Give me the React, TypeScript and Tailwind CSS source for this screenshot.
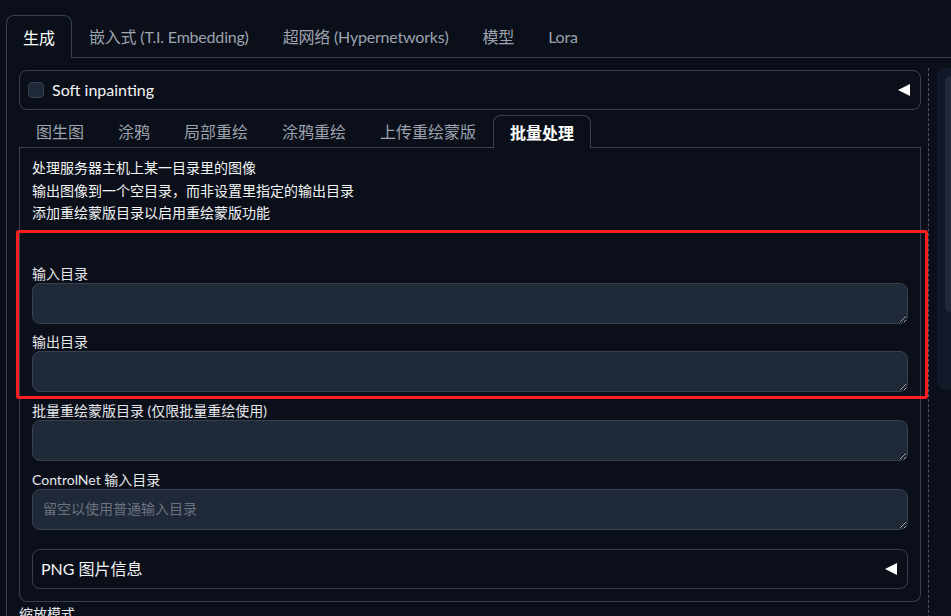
import React from "react";

function Tri({ className = "" }: { className?: string }) {
  return (
    <svg width="12" height="12" viewBox="0 0 12 12" className={className}>
      <polygon points="12,0 12,12 0,6" fill="#ffffff" />
    </svg>
  );
}

function Field({ label, placeholder }: { label: string; placeholder?: string }) {
  return (
    <div className="flex flex-col">
      <div className="h-[19px] leading-[19px] text-[14px] text-[#e5e7eb]">{label}</div>
      <textarea
        placeholder={placeholder}
        className="h-[41px] w-full resize-y rounded-lg border border-[#374151] bg-[#1f2937] px-[10px] py-[9px] text-[14px] leading-[20px] text-[#f3f4f6] placeholder:text-[#6b7280] outline-none"
      />
    </div>
  );
}

export default function App() {
  const topTabs = ["嵌入式 (T.I. Embedding)", "超网络 (Hypernetworks)", "模型", "Lora"];
  const subTabs = ["图生图", "涂鸦", "局部重绘", "涂鸦重绘", "上传重绘蒙版"];
  return (
    <div className="relative h-[616px] w-[951px] overflow-hidden bg-[#0b0f19] font-['Lato','Noto_Sans_CJK_SC',sans-serif]">
      <div className="pl-[6px] pt-[15px]">
        {/* top tabs */}
        <div className="flex w-[1000px] items-end border-b border-[#374151]">
          <div className="-mb-px flex h-[43px] items-center rounded-t-lg border border-b-0 border-[#374151] bg-[#0b0f19] px-4 pt-[2px] text-[16px] text-white">
            生成
          </div>
          {topTabs.map((t) => (
            <div
              key={t}
              className="flex h-[42px] items-center border border-transparent px-4 pt-[2px] text-[16px] tracking-[-0.2px] text-[#9ca3af]"
            >
              {t}
            </div>
          ))}
        </div>
        {/* outer panel */}
        <div className="flex w-[1000px] border-l border-[#374151] pl-3 pt-3">
          <div className="flex w-[902px] flex-col">
            {/* soft inpainting */}
            <div className="flex h-[40px] items-center rounded-lg border border-[#374151] pl-2 pr-[10px]">
              <div className="h-4 w-4 rounded-[4px] border border-[#374151] bg-[#1f2937]" />
              <span className="ml-2 text-[16px] text-[#f3f4f6]">Soft inpainting</span>
              <Tri className="ml-auto" />
            </div>
            {/* sub tabs */}
            <div className="mt-[5px] flex items-end border-b border-[#374151]">
              {subTabs.map((t) => (
                <div
                  key={t}
                  className="flex h-[32px] items-center border border-transparent px-4 pt-[1px] text-[16px] text-[#9ca3af]"
                >
                  {t}
                </div>
              ))}
              <div className="-mb-px flex h-[33px] items-center rounded-t-lg border border-b-0 border-[#374151] bg-[#0b0f19] px-4 pt-[1px] text-[16px] font-bold text-white">
                批量处理
              </div>
            </div>
            {/* panel */}
            <div className="flex flex-col rounded-b-lg border border-t-0 border-[#374151] px-3 pb-3 pt-[9px]">
              <div className="text-[14px] leading-[22.5px] text-[#f3f4f6]">
                <p>处理服务器主机上某一目录里的图像</p>
                <p>输出图像到一个空目录，而非设置里指定的输出目录</p>
                <p>添加重绘蒙版目录以启用重绘蒙版功能</p>
              </div>
              <div className="mt-[39px] flex flex-col gap-[8.7px]">
                <Field label="输入目录" />
                <Field label="输出目录" />
                <Field label="批量重绘蒙版目录 (仅限批量重绘使用)" />
                <Field label="ControlNet 输入目录" placeholder="留空以使用普通输入目录" />
              </div>
              <div className="mt-[19px] flex h-[40px] items-center rounded-lg border border-[#374151] pl-2 pr-[10px]">
                <span className="text-[16px] text-[#f3f4f6]">PNG 图片信息</span>
                <Tri className="ml-auto" />
              </div>
            </div>
            <div className="mt-[2px] text-[14px] leading-[20px] text-[#e5e7eb]">缩放模式</div>
          </div>
          {/* resize handle */}
          <div className="-mt-[2px] ml-[7px] h-[600px] border-l border-dashed border-[#4b5563]" />
          {/* right column */}
          <div className="-mt-[2px] ml-[8px] h-[322px] w-[60px] rounded-lg bg-[#111827] pl-2 pt-2">
            <div className="h-[236px] w-full rounded-md bg-[#1f2937]" />
          </div>
        </div>
      </div>
      {/* annotation */}
      <div className="pointer-events-none absolute left-[16px] top-[230px] h-[169px] w-[912px] rounded-[3px] border-[3px] border-[#ff1f1f]" />
    </div>
  );
}
